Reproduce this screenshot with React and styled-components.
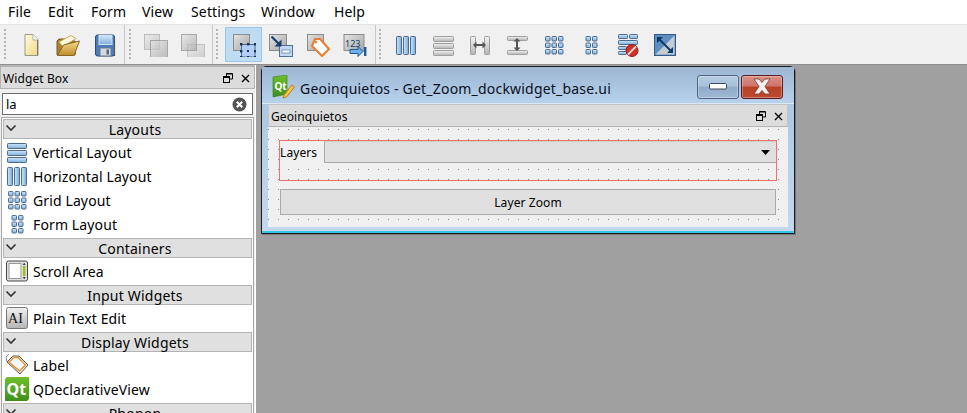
import React from "react";
import styled, { createGlobalStyle } from "styled-components";

const Global = createGlobalStyle`
  html, body { margin: 0; padding: 0; background: #a0a0a0; }
  #root { width: 967px; height: 413px; overflow: hidden; }
  * { box-sizing: border-box; }
`;
const Page = styled.div`
  width: 967px; height: 413px; display: flex; flex-direction: column; overflow: hidden;
  font-family: "Noto Sans", "Open Sans", sans-serif; color: #000;
`;
const MenuBar = styled.div`
  height: 24px; background: #fff; display: flex; align-items: center; flex: none; font-size: 14px; letter-spacing: .15px;
`;
const MenuItem = styled.div`
  width: ${p => p.$w}px; padding-left: 8px; white-space: nowrap; line-height: 24px;
`;
const ToolBar = styled.div`
  height: 41px; flex: none; background: #f0f0f0; border-top: 1px solid #e4e4e4; border-bottom: 1px solid #8f8f8f;
  display: flex; align-items: center; padding-left: 4px;
`;
const Handle = styled.div`
  width: 2px; height: 31px; flex: none; margin-right: ${p => p.$mr}px;
  background: repeating-linear-gradient(#b4b4b4 0 2px, transparent 2px 4px);
`;
const Sep = styled.div`
  width: 1px; height: 39px; flex: none; background: #c8c8c8; margin: 0 ${p => p.$r}px 0 ${p => p.$l}px;
`;
const ToolBtn = styled.div`
  width: ${p => p.$w || 37}px; height: 35px; flex: none; display: flex; align-items: center; justify-content: center;
  background: ${p => (p.$on ? "#bfdcf2" : "transparent")};
  outline: ${p => (p.$on ? "1px solid #9cc6e8" : "none")};
  outline-offset: -1px;
`;
const Main = styled.div`
  flex: 1; display: flex; background: #a0a0a0; min-height: 0;
`;
const Dock = styled.div`
  width: 256px; flex: none; background: #f0f0f0; display: flex; flex-direction: column; border-right: 1px solid #fff;
`;
const DockTitle = styled.div`
  height: 24px; flex: none; background: #dcdcdc; border: 1px solid #b4b4b4; border-top-width: 2px; display: flex; align-items: center;
  padding: 1px 3px 0 2px; font-size: 12px; letter-spacing: .1px;
`;
const Grow = styled.div`flex: 1;`;
const TitleIcons = styled.div`
  display: flex; align-items: center; gap: ${p => p.$gap}px; margin-right: ${p => p.$mr}px;
`;
const SearchBox = styled.div`
  height: 22px; margin: 4px 2px 2px 2px; background: #fff; border: 1px solid #6f6f6f; display: flex; align-items: center;
  padding: 0 5px 0 3px; font-size: 13px; flex: none; justify-content: space-between;
`;
const Tree = styled.div`
  flex: 1; background: #fff; margin: 0 1px; border: 1px solid #a8a8a8; border-bottom: 0; padding: 1px 1px 0; overflow: hidden; min-height: 0;
`;
const Category = styled.div`
  height: 20px; background: #e0e0e0; border: 1px solid #b4b4b4; font-size: 14px; line-height: 19px; text-align: center;
  position: relative; letter-spacing: .2px; padding-left: 15px;
`;
const Chevron = styled.svg`
  position: absolute; left: 1px; top: 3px; width: 12px; height: 10px;
`;
const Items = styled.div`
  padding: 2px 0 1px;
`;
const Item = styled.div`
  height: 24px; display: flex; align-items: center; font-size: 14px; letter-spacing: .12px; padding: 0 0 2px 2px; white-space: nowrap;
`;
const ItemIcon = styled.div`
  width: 24px; height: 24px; flex: none; display: flex; align-items: center; justify-content: center; margin-right: 4px;
`;
const Canvas = styled.div`
  flex: 1; padding: 1px 0 0 5px; min-width: 0;
`;
const Win = styled.div`
  width: 534px; height: 168px; border: 1px solid #1c1c1c; border-radius: 5px 5px 0 0; box-shadow: inset 0 -2px 0 #39c6e4, 1px 1px 0 #777;
  background: linear-gradient(#a8c3de 0%, #c4d9f0 100%);
  display: flex; flex-direction: column; padding: 0 6px 6px;
`;
const WinBar = styled.div`
  height: 37px; flex: none; display: flex; align-items: center; margin: 0 -6px; padding: 2px 11px 0 9px;
  background: linear-gradient(#9cb6d3, #b9d2ec);
  box-shadow: inset 0 -1px 0 #dbe8f6;
`;
const WinTitle = styled.div`
  font-size: 14px; margin-left: 5px; padding-top: 3px; flex: 1; letter-spacing: .2px; white-space: nowrap; color: #0a1020;
`;
const WinBtn = styled.div`
  width: 42px; height: 24px; border-radius: 3px; display: flex; align-items: center; justify-content: center; flex: none;
  border: 1px solid ${p => (p.$close ? "#5a1c20" : "#4f6480")};
  margin-left: ${p => (p.$close ? 2 : 0)}px;
  background: ${p => (p.$close
    ? "linear-gradient(#dc8f84 0%, #d0736a 46%, #b84025 50%, #bc4a30 100%)"
    : "linear-gradient(#b6cce2 0%, #a8c0da 46%, #90aac8 50%, #9fb8d4 100%)")};
  box-shadow: inset 0 0 0 1px rgba(255,255,255,.3);
`;
const Panel = styled.div`
  flex: 1; background: #f0f0f0; display: flex; flex-direction: column; min-height: 0;
`;
const PanelTitle = styled.div`
  height: 23px; flex: none; background: #dcdcdc; border: 1px solid #c4c4c4; border-bottom-color: #b4b4b4; display: flex; align-items: center;
  padding: 1px 3px 0 2px; font-size: 12px; letter-spacing: .1px;
`;
const Form = styled.div`
  flex: 1; padding: 13px 11px 12px 11px; display: flex; flex-direction: column; gap: 8px;
  background-image: radial-gradient(circle at .5px .5px, #8c8c8c .65px, transparent .75px);
  background-size: 10px 10px; background-position: 0 2px;
`;
const Group = styled.div`
  height: 41px; flex: none; border: 1px solid #f66f6f; display: flex; align-items: flex-start;
`;
const GroupLabel = styled.div`
  width: 44px; height: 22px; flex: none; font-size: 12px; line-height: 24px; background: #f0f0f0; letter-spacing: .1px;
`;
const Combo = styled.div`
  flex: 1; height: 22px; background: #e0e0e0; border-left: 1px solid #aaa; border-bottom: 1px solid #aaa; border-top: 1px solid #d0d0d0; display: flex; align-items: center; justify-content: flex-end; padding-right: 6px;
`;
const Btn = styled.div`
  height: 26px; flex: none; margin: 0 1px; background: #e0e0e0; border: 1px solid #aaa; font-size: 12px; line-height: 26px; text-align: center; letter-spacing: .1px;
`;

const Svg = ({ s = 24, children }) => <svg width={s} height={s} viewBox="0 0 24 24" style={{ display: "block", flex: "none" }}>{children}</svg>;

const Defs = () => (
  <svg width="0" height="0" style={{ position: "absolute" }}>
    <defs>
      <linearGradient id="gb" x1="0" y1="0" x2="1" y2="0"><stop offset="0" stopColor="#cfe6fb" /><stop offset="1" stopColor="#78abda" /></linearGradient>
      <linearGradient id="gb2" x1="0" y1="0" x2="0" y2="1"><stop offset="0" stopColor="#cfe6fb" /><stop offset="1" stopColor="#7fafdc" /></linearGradient>
      <linearGradient id="gg" x1="0" y1="0" x2="0" y2="1"><stop offset="0" stopColor="#f2f2f2" /><stop offset="1" stopColor="#b4b4b4" /></linearGradient>
      <linearGradient id="gs" x1="0" y1="0" x2="1" y2="1"><stop offset="0" stopColor="#e4e4e4" /><stop offset="1" stopColor="#a6a6a6" /></linearGradient>
      <linearGradient id="gy" x1="0" y1="0" x2="1" y2="1"><stop offset="0" stopColor="#fffbe0" /><stop offset="1" stopColor="#f0d880" /></linearGradient>
      <linearGradient id="gf" x1="0" y1="0" x2="0" y2="1"><stop offset="0" stopColor="#f6dc90" /><stop offset="1" stopColor="#c08a2c" /></linearGradient>
      <linearGradient id="gt" x1="0" y1="0" x2="0" y2="1"><stop offset="0" stopColor="#6ec02a" /><stop offset="1" stopColor="#3f8f1c" /></linearGradient>
    </defs>
  </svg>
);

const NewIcon = () => <Svg><path d="M6 1.5h8l5 5V22.5H6z" fill="url(#gy)" stroke="#9a9a8a" /><path d="M14 1.5V7h5" fill="#fff" stroke="#b0b0a0" /><path d="M18.5 7v15.5" stroke="#777" /></Svg>;
const OpenIcon = () => <Svg><path d="M1 22l0-14 2-2h6l2 2h8l1 3-1 11z" fill="#a9812f" stroke="#7a5c20" /><path d="M3 9 15 2.500l5 3-13 8z" fill="#fff8e0" stroke="#c8ac60" /><path d="M1.500 22.500 7.500 12 23.500 8 18 22.500z" fill="url(#gf)" stroke="#8a6820" /></Svg>;
const SaveIcon = () => <Svg><rect x="2.5" y="2" width="19" height="21" rx="2" fill="#4d7cb6" stroke="#2c4a78" /><rect x="6" y="2.5" width="13" height="9" fill="url(#gb2)" stroke="#cfe0f0" /><rect x="7" y="15" width="11" height="8" fill="#d8d8d8" stroke="#6a7a90" /><rect x="13.5" y="16.5" width="2.5" height="5" fill="#4a6a9a" /><path d="M21.500 5v18" stroke="#555" strokeWidth="1.2" /></Svg>;
const Sq = ({ x, y, w, h, o = 1 }) => <rect x={x + .5} y={y + .5} width={w} height={h} fill="url(#gs)" stroke="#8c8c8c" opacity={o} />;
const FrontIcon = () => <Svg><Sq x={0} y={1} w={15} h={15} o=".5" /><Sq x={6} y={7} w={17} h={17} o=".7" /></Svg>;
const BackIcon = () => <Svg><Sq x={6} y={11} w={17} h={13} o=".45" /><Sq x={0} y={1} w={15} h={16} o=".7" /></Svg>;
const SelectIcon = () => <Svg><Sq x={1} y={1} w={16} h={16} /><rect x="9.500" y="11.500" width="13.500" height="12.500" fill="#b4cdfa" stroke="#35507c" strokeWidth=".8" />{[[8, 10], [15, 10], [22, 10], [8, 17], [22, 17], [8, 23], [15, 23], [22, 23]].map(([x, y], i) => <rect key={i} x={x} y={y} width="2.4" height="2.4" fill="#1c3050" />)}<rect x="15" y="17" width="2" height="2" fill="#1c3050" /></Svg>;
const BuddyIcon = () => <Svg><Sq x={0} y={1} w={17} h={16} /><rect x="10.5" y="12.5" width="13" height="11" fill="#c4d8f4" stroke="#54708f" /><rect x="13" y="17" width="8" height="3" fill="#fff" stroke="#4d7ab0" strokeWidth=".7" /><path d="M2.500 3.500 11 12" stroke="#1b3f70" strokeWidth="2.2" /><path d="M12.500 13.500V6.500L5.500 13.500z" fill="#1b3f70" /></Svg>;
const TagIcon = () => <Svg><Sq x={1} y={1} w={16} h={16} /><path d="M9 6 h5 l9 10 -7 7 -10-10 z" fill="#fff" stroke="#ec7d2e" strokeWidth="2" strokeLinejoin="round" /><circle cx="10" cy="9" r="1.2" fill="#ec7d2e" /></Svg>;
const NumIcon = () => <Svg><rect x="1" y="1.5" width="20" height="16" fill="url(#gs)" stroke="#8c8c8c" /><text x="2" y="14" fontSize="9" fontFamily="Noto Sans, sans-serif" fill="#1c3a66">123</text><path d="M7 16.500h8v-3l5 5-5 5v-3H7z" fill="#6fb0e8" stroke="#1f5a9a" /><rect x="21" y="14" width="2.4" height="9" fill="#1f5a9a" /></Svg>;

const Bar = ({ x, y, w, h, c }) => <rect x={x + .5} y={y + .5} width={w} height={h} rx=".8" fill={c === "g" ? "url(#gg)" : c === "h" ? "url(#gb2)" : "url(#gb)"} stroke={c === "g" ? "#a0a0a0" : "#4d6a8f"} />;
const HLay = ({ s }) => <Svg s={s}><Bar x={2} y={3} w={5} h={18} /><Bar x={9} y={3} w={5} h={18} /><Bar x={16} y={3} w={5} h={18} /></Svg>;
const VLayG = () => <Svg><Bar c="g" x={2} y={3} w={20} h={5} /><Bar c="g" x={2} y={10} w={20} h={5} /><Bar c="g" x={2} y={17} w={20} h={5} /></Svg>;
const VLay = ({ s }) => <Svg s={s}><Bar c="h" x={2} y={3} w={19} h={5} /><Bar c="h" x={2} y={10} w={19} h={5} /><Bar c="h" x={2} y={17} w={19} h={5} /></Svg>;
const HSplit = () => <Svg><Bar c="g" x={2} y={3} w={5} h={18} /><Bar c="g" x={16} y={3} w={5} h={18} /><path d="M5 12l3.500-3.500v2.500h6V8.500l3.500 3.500-3.500 3.500V13h-6v2.500z" fill="#555" /></Svg>;
const VSplit = () => <Svg><Bar c="g" x={2} y={3} w={20} h={4} /><Bar c="g" x={2} y={17} w={20} h={4} /><path d="M12 5l3.500 3.500H13v6h2.500L12 18l-3.500-3.500H11v-6H8.500z" fill="#555" /></Svg>;
const GridI = ({ s, fill = "url(#gb2)" }) => <Svg s={s}>{[3, 9.500, 16].flatMap(y => [3, 9.500, 16].map(x => <rect key={x + "-" + y} x={x + .5} y={y + .5} width="4.500" height="4.500" rx=".8" fill={fill} stroke="#4d6a8f" />))}</Svg>;
const FormI = ({ s }) => <Svg s={s}>{[3, 9.500, 16].flatMap(y => [6.500, 13].map(x => <rect key={x + "-" + y} x={x + .5} y={y + .5} width="4.500" height="4.500" rx=".8" fill="url(#gb2)" stroke="#4d6a8f" />))}</Svg>;
const BreakI = () => <Svg><Bar c="h" x={2} y={1} w={9} h={4} /><Bar c="h" x={13} y={1} w={8} h={4} /><Bar c="h" x={2} y={7} w={19} h={4} /><Bar c="h" x={2} y={13} w={8} h={3} /><Bar c="h" x={2} y={18} w={8} h={3} /><circle cx="16" cy="17.5" r="6" fill="#d03028" stroke="#8a1c1c" /><path d="M12 21.500 20 13.500" stroke="#f0d0c8" strokeWidth="2" /></Svg>;
const AdjustI = () => <Svg><rect x="1.5" y="1.5" width="21" height="21" fill="#5f8fc0" stroke="#2f5a8a" /><path d="M2.500 21.500 21.500 2.500V21.500z" fill="#c4ccd0" /><path d="M5 5l14 14" stroke="#0c3a68" strokeWidth="2" /><path d="M4 4h6L4 10zM20 20h-6l6-6z" fill="#0c3a68" /></Svg>;

const ScrollI = () => <Svg><rect x="1.5" y="2" width="21" height="20" rx="2" fill="#e0e0e0" stroke="#444" /><rect x="4" y="4.500" width="12" height="15" fill="#fff" stroke="#999" /><rect x="18" y="7" width="2.500" height="10" fill="#9ac020" /><path d="M17.800 6 19.200 3.800 20.600 6zM17.800 18 19.200 20.200 20.600 18z" fill="#333" /></Svg>;
const TextI = () => <Svg><rect x="1.5" y="1.5" width="21" height="21" rx="2" fill="url(#gg)" stroke="#777" /><text x="3" y="17" fontSize="14" fontFamily="Liberation Serif, serif" fill="#111">AI</text></Svg>;
const LabelI = () => <Svg><path d="M2 9 8 3h6l9 9-8 9z" fill="#fdf3d8" stroke="#555" /><path d="M4 9 9 4.500h4l7.500 7.500-6 6z" fill="#fff" stroke="#e88a30" strokeWidth="1.4" /><path d="M2 9 1 4l3-3" fill="none" stroke="#888" /></Svg>;
const QtI = ({ s = 24 }) => <Svg s={s}><path d="M2 0H24V22L22 24H0V2z" fill="url(#gt)" /><text x="1.500" y="18" fontSize="16" fontWeight="700" fontFamily="Noto Sans, sans-serif" fill="#fff">Qt</text></Svg>;
const DesignerI = () => <Svg><path d="M2 2 16 0V19L2 22z" fill="url(#gt)" stroke="#3a7a1a" strokeWidth=".6" /><text x="3.400" y="15" fontSize="10" fontWeight="700" fontFamily="Noto Sans, sans-serif" fill="#fff">Qt</text><path d="M13 20 21 10l2.500 2-8 10-3.500 1z" fill="#f4c840" stroke="#c07a20" /></Svg>;

const FloatGlyph = () => <svg width="10" height="10" viewBox="0 0 10 10"><path d="M3.500.5h6v5.500H7M3.500.5v2.500" fill="none" stroke="#000" /><path d="M3 1h6" stroke="#000" /><rect x=".5" y="3.500" width="6" height="6" fill="none" stroke="#000" /><path d="M0 4.500h6.500" stroke="#000" /></svg>;
const CloseGlyph = () => <svg width="9" height="9" viewBox="0 0 9 9"><path d="M1 1l7 7M8 1 1 8" stroke="#000" strokeWidth="1.4" /></svg>;

const menus = [["File", 40], ["Edit", 43], ["Form", 51], ["View", 49], ["Settings", 70], ["Window", 73], ["Help", 60]];

const groups = [
  { name: "Layouts", items: [["Vertical Layout", <VLay key="a" />], ["Horizontal Layout", <HLay key="b" />], ["Grid Layout", <GridI key="c" />], ["Form Layout", <FormI key="d" />]] },
  { name: "Containers", items: [["Scroll Area", <ScrollI key="a" />]] },
  { name: "Input Widgets", items: [["Plain Text Edit", <TextI key="a" />]] },
  { name: "Display Widgets", items: [["Label", <LabelI key="a" />], ["QDeclarativeView", <QtI key="b" />]] },
  { name: "Phonon", items: [] },
];

export default function App() {
  return (
    <Page>
      <Global />
      <Defs />
      <MenuBar>{menus.map(([t, w]) => <MenuItem key={t} $w={w}>{t}</MenuItem>)}</MenuBar>
      <ToolBar>
        <Handle $mr={6} />
        <ToolBtn><NewIcon /></ToolBtn>
        <ToolBtn><OpenIcon /></ToolBtn>
        <ToolBtn><SaveIcon /></ToolBtn>
        <Sep $l={1} $r={4} />
        <Handle $mr={6} />
        <ToolBtn><FrontIcon /></ToolBtn>
        <ToolBtn><BackIcon /></ToolBtn>
        <Sep $l={1} $r={3} />
        <Handle $mr={7} />
        <ToolBtn $on><SelectIcon /></ToolBtn>
        <ToolBtn><BuddyIcon /></ToolBtn>
        <ToolBtn><TagIcon /></ToolBtn>
        <ToolBtn><NumIcon /></ToolBtn>
        <Sep $l={2} $r={3} />
        <Handle $mr={6} />
        <ToolBtn><HLay /></ToolBtn>
        <ToolBtn><VLayG /></ToolBtn>
        <ToolBtn><HSplit /></ToolBtn>
        <ToolBtn><VSplit /></ToolBtn>
        <ToolBtn><GridI /></ToolBtn>
        <ToolBtn><FormI /></ToolBtn>
        <ToolBtn><BreakI /></ToolBtn>
        <ToolBtn><AdjustI /></ToolBtn>
      </ToolBar>
      <Main>
        <Dock>
          <DockTitle>
            Widget Box<Grow />
            <TitleIcons $gap={8} $mr={1}><FloatGlyph /><CloseGlyph /></TitleIcons>
          </DockTitle>
          <SearchBox>
            la
            <svg width="15" height="15" viewBox="0 0 15 15"><circle cx="7.5" cy="7.5" r="7" fill="#555" /><path d="M4.800 4.800l5.400 5.400M10.200 4.800 4.800 10.200" stroke="#fff" strokeWidth="2" /></svg>
          </SearchBox>
          <Tree>
            {groups.map(g => (
              <div key={g.name}>
                <Category>
                  <Chevron viewBox="0 0 12 10"><path d="M1.500 2.500 6 7l4.500-4.500" fill="none" stroke="#333" strokeWidth="1.6" /></Chevron>
                  {g.name}
                </Category>
                {g.items.length > 0 && (
                  <Items>
                    {g.items.map(([t, ic]) => (
                      <Item key={t}><ItemIcon>{ic}</ItemIcon>{t}</Item>
                    ))}
                  </Items>
                )}
              </div>
            ))}
          </Tree>
        </Dock>
        <Canvas>
          <Win>
            <WinBar>
              <DesignerI />
              <WinTitle>Geoinquietos - Get_Zoom_dockwidget_base.ui</WinTitle>
              <WinBtn><svg width="18" height="7" viewBox="0 0 18 7"><rect x=".5" y=".5" width="17" height="5.500" rx="1" fill="#fff" stroke="#3a4a60" /></svg></WinBtn>
              <WinBtn $close><svg width="22" height="17" viewBox="0 0 22 17"><path d="M3 1h5l3 3.500L14 1h5l-5 7.500 5 7.500h-5l-3-3.500L8 16H3l5-7.500z" fill="#f0f0f0" stroke="#7a3a30" strokeWidth=".8" /></svg></WinBtn>
            </WinBar>
            <Panel>
              <PanelTitle>
                Geoinquietos<Grow />
                <TitleIcons $gap={8} $mr={1}><FloatGlyph /><CloseGlyph /></TitleIcons>
              </PanelTitle>
              <Form>
                <Group>
                  <GroupLabel>Layers</GroupLabel>
                  <Combo><svg width="9" height="5" viewBox="0 0 9 5"><path d="M0 0h9L4.500 5z" fill="#000" /></svg></Combo>
                </Group>
                <Btn>Layer Zoom</Btn>
              </Form>
            </Panel>
          </Win>
        </Canvas>
      </Main>
    </Page>
  );
}
